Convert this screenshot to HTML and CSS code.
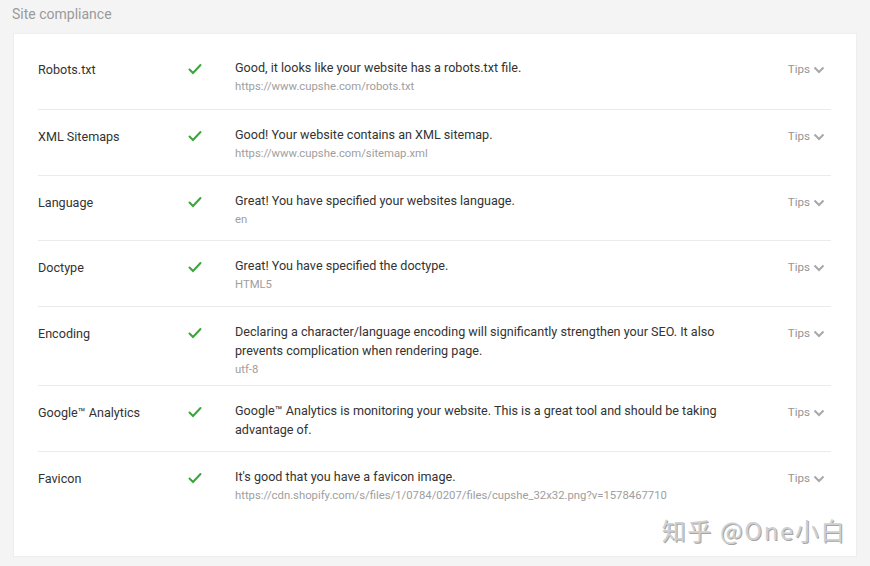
FILE: index.html
```html
<!DOCTYPE html>
<html lang="en">
<head>
<meta charset="utf-8">
<title>Site compliance</title>
<link rel="stylesheet" href="styles.css">
</head>
<body>
<div class="page">
  <h2 class="section-title">Site compliance</h2>
  <div class="card">
    <div class="row">
      <div class="label">Robots.txt</div>
      <div class="status"><svg viewBox="0 0 14 12" class="check"><path d="M1.5 6.5 L5 10 L12.5 2"/></svg></div>
      <div class="body">
        <div class="msg">Good, it looks like your website has a robots.txt file.</div>
        <div class="detail">https://www.cupshe.com/robots.txt</div>
      </div>
      <div class="tips">Tips <svg viewBox="0 0 12 8" class="chev"><path d="M1.5 1.5 L6 6 L10.5 1.5"/></svg></div>
    </div>
    <div class="row">
      <div class="label">XML Sitemaps</div>
      <div class="status"><svg viewBox="0 0 14 12" class="check"><path d="M1.5 6.5 L5 10 L12.5 2"/></svg></div>
      <div class="body">
        <div class="msg">Good! Your website contains an XML sitemap.</div>
        <div class="detail">https://www.cupshe.com/sitemap.xml</div>
      </div>
      <div class="tips">Tips <svg viewBox="0 0 12 8" class="chev"><path d="M1.5 1.5 L6 6 L10.5 1.5"/></svg></div>
    </div>
    <div class="row">
      <div class="label">Language</div>
      <div class="status"><svg viewBox="0 0 14 12" class="check"><path d="M1.5 6.5 L5 10 L12.5 2"/></svg></div>
      <div class="body">
        <div class="msg">Great! You have specified your websites language.</div>
        <div class="detail">en</div>
      </div>
      <div class="tips">Tips <svg viewBox="0 0 12 8" class="chev"><path d="M1.5 1.5 L6 6 L10.5 1.5"/></svg></div>
    </div>
    <div class="row">
      <div class="label">Doctype</div>
      <div class="status"><svg viewBox="0 0 14 12" class="check"><path d="M1.5 6.5 L5 10 L12.5 2"/></svg></div>
      <div class="body">
        <div class="msg">Great! You have specified the doctype.</div>
        <div class="detail">HTML5</div>
      </div>
      <div class="tips">Tips <svg viewBox="0 0 12 8" class="chev"><path d="M1.5 1.5 L6 6 L10.5 1.5"/></svg></div>
    </div>
    <div class="row">
      <div class="label">Encoding</div>
      <div class="status"><svg viewBox="0 0 14 12" class="check"><path d="M1.5 6.5 L5 10 L12.5 2"/></svg></div>
      <div class="body">
        <div class="msg">Declaring a character/language encoding will significantly strengthen your SEO. It also prevents complication when rendering page.</div>
        <div class="detail">utf-8</div>
      </div>
      <div class="tips">Tips <svg viewBox="0 0 12 8" class="chev"><path d="M1.5 1.5 L6 6 L10.5 1.5"/></svg></div>
    </div>
    <div class="row">
      <div class="label">Google™ Analytics</div>
      <div class="status"><svg viewBox="0 0 14 12" class="check"><path d="M1.5 6.5 L5 10 L12.5 2"/></svg></div>
      <div class="body">
        <div class="msg">Google™ Analytics is monitoring your website. This is a great tool and should be taking advantage of.</div>
      </div>
      <div class="tips">Tips <svg viewBox="0 0 12 8" class="chev"><path d="M1.5 1.5 L6 6 L10.5 1.5"/></svg></div>
    </div>
    <div class="row">
      <div class="label">Favicon</div>
      <div class="status"><svg viewBox="0 0 14 12" class="check"><path d="M1.5 6.5 L5 10 L12.5 2"/></svg></div>
      <div class="body">
        <div class="msg">It's good that you have a favicon image.</div>
        <div class="detail">https://cdn.shopify.com/s/files/1/0784/0207/files/cupshe_32x32.png?v=1578467710</div>
      </div>
      <div class="tips">Tips <svg viewBox="0 0 12 8" class="chev"><path d="M1.5 1.5 L6 6 L10.5 1.5"/></svg></div>
    </div>
    <div class="watermark">知乎 @One小白</div>
  </div>
</div>
</body>
</html>
```
FILE: styles.css
```css
* { box-sizing: border-box; }
html, body {
  margin: 0;
  padding: 0;
  background: #f4f4f4;
  font-family: Roboto, "Liberation Sans", Arial, sans-serif;
}
.page {
  padding: 4px 13px 10px 13px;
  width: 870px;
}
.section-title {
  margin: 0 0 9px -1px;
  font-size: 14px;
  font-weight: 400;
  line-height: 20px;
  color: #9a9a9a;
}
.card {
  position: relative;
  background: #fff;
  width: 844px;
  height: 524px;
  border: 1px solid #eeeeee;
  padding: 9px 25px 0 24px;
}
.row {
  display: grid;
  grid-template-columns: 150px 47px 1fr 62px;
  min-height: 66px;
  padding: 15px 0 6px;
  border-top: 1px solid #ebebeb;
}
.row:first-child {
  border-top: none;
}
.row:nth-child(3) {
  min-height: 65px;
}
.label {
  font-size: 12.6px;
  line-height: 19px;
  color: #333;
  padding-top: 2px;
}
.status {
  padding-top: 5px;
}
.check {
  display: block;
  width: 14px;
  height: 12px;
  fill: none;
  stroke: #3aa53a;
  stroke-width: 2;
  stroke-linecap: round;
}
.body {
  padding-right: 20px;
}
.msg {
  font-size: 12.6px;
  line-height: 19px;
  color: #333;
}
.detail {
  font-size: 11.3px;
  line-height: 19px;
  color: #9e9e9e;
}
.tips {
  display: flex;
  align-items: center;
  justify-content: flex-end;
  gap: 3px;
  height: 21px;
  font-size: 11.6px;
  color: #959595;
  padding-right: 6px;
}
.chev {
  width: 12px;
  height: 8px;
  fill: none;
  stroke: #a8a8a8;
  stroke-width: 2;
  margin-top: 2px;
}
.watermark {
  position: absolute;
  right: 10px;
  bottom: 9px;
  font-family: "Noto Sans CJK SC", "Liberation Sans", sans-serif;
  font-size: 24px;
  color: #d0d0d0;
  letter-spacing: 1.6px;
  text-shadow: 1px 1px 0 #a5a5a5;
}
```
